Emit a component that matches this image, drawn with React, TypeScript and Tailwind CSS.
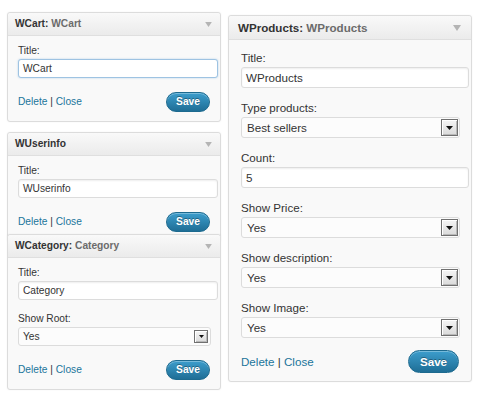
import React from "react";

type Size = "sm" | "lg";

type Field =
  | { kind: "input"; label: string; value: string; focus?: boolean }
  | { kind: "select"; label: string; value: string };

const sizes = {
  sm: {
    box: "w-[214px]",
    head: "h-[23px] pl-[7px] pr-[8px] text-[10.2px]",
    tri: "w-[7px] h-[5px]",
    body: "pt-[9px] pb-[9px] pl-[10px] pr-[10px]",
    label: "text-[10.2px] leading-[12px]",
    input: "mt-[2px] h-[19px] w-[200px] text-[10.2px] pl-[4px]",
    select: "mt-[2px] h-[19px] w-[193px] text-[10.2px] pl-[4px] pr-[2px]",
    arrow: "w-[14px] h-[13px]",
    arrowTri: "w-[5px] h-[3px]",
    group: "mb-[13px]",
    actions: "mt-[14px] text-[10.2px]",
    save: "h-[20px] w-[44px] text-[10.2px]",
  },
  lg: {
    box: "w-[244px]",
    head: "h-[24px] pl-[9px] pr-[10px] text-[11.6px]",
    tri: "w-[8px] h-[6px]",
    body: "pt-[11px] pb-[8px] pl-[12px] pr-[12px]",
    label: "text-[11.6px] leading-[14px]",
    input: "mt-[2px] h-[21px] w-[228px] text-[11.6px] pl-[4px]",
    select: "mt-[2px] h-[21px] w-[219px] text-[11.6px] pl-[5px] pr-[1px]",
    arrow: "w-[17px] h-[17px]",
    arrowTri: "w-[7px] h-[4px]",
    group: "mb-[13px]",
    actions: "mt-[12px] text-[11.6px]",
    save: "h-[23px] w-[51px] text-[11.6px]",
  },
};

function Widget({ size, name, sub, fields, className = "" }: { size: Size; name: string; sub?: string; fields: Field[]; className?: string }) {
  const s = sizes[size];
  return (
    <div className={`${s.box} ${className} border border-[#dcdcdc] rounded-[3px] bg-[#f9f9f9] shadow-[0_0_2px_rgba(0,0,0,0.06)]`}>
      {/* header */}
      <div className={`${s.head} flex items-center justify-between border-b border-[#dfdfdf] rounded-t-[3px] bg-[linear-gradient(to_bottom,#f9f9f9,#ebebeb)] font-bold`}>
        <div className="whitespace-nowrap">
          <span className="text-[#333]">{name}{sub ? ":" : ""}</span>
          {sub && <span className="text-[#6b6b6b]"> {sub}</span>}
        </div>
        <svg viewBox="0 0 8 6" className={s.tri}>
          <path d="M0 0h8L4 6z" fill="#b4b4b4" />
        </svg>
      </div>

      <div className={s.body}>
        {fields.map((f, i) => (
          <div key={f.label} className={i < fields.length - 1 ? s.group : ""}>
            <div className={`${s.label} text-[#333]`}>{f.label}</div>
            {f.kind === "input" ? (
              <div
                className={`${s.input} flex items-center rounded-[3px] bg-white text-[#333] border ${
                  f.focus
                    ? "border-[#9ec3e2] shadow-[0_0_2px_rgba(40,130,200,0.35)]"
                    : "border-[#dcdcdc] shadow-[inset_0_1px_2px_rgba(0,0,0,0.07)]"
                }`}
              >
                {f.value}
              </div>
            ) : (
              <div className={`${s.select} flex items-center justify-between rounded-[3px] border border-[#dcdcdc] bg-[#fcfcfc] text-[#333]`}>
                <span>{f.value}</span>
                <div className={`${s.arrow} flex items-center justify-center border border-[#707070] bg-[linear-gradient(to_bottom,#f5f5f5,#dadada)] shadow-[inset_1px_1px_0_#fff,inset_-1px_-1px_0_#b8b8b8]`}>
                  <svg viewBox="0 0 7 4" className={s.arrowTri}>
                    <path d="M0 0h7L3.5 4z" fill="#111" />
                  </svg>
                </div>
              </div>
            )}
          </div>
        ))}

        <div className={`${s.actions} flex items-center justify-between`}>
          <div className="text-[#333]">
            <span className="text-[#21759b]">Delete</span> | <span className="text-[#21759b]">Close</span>
          </div>
          <button
            className={`${s.save} flex items-center justify-center rounded-full border border-[#1d6a8f] bg-[linear-gradient(to_bottom,#3c9dcc,#1f6e96)] text-white font-bold shadow-[inset_0_1px_0_rgba(255,255,255,0.3)] [text-shadow:0_-1px_0_rgba(0,0,0,0.35)]`}
          >
            Save
          </button>
        </div>
      </div>
    </div>
  );
}

export default function App() {
  return (
    <div className="w-[478px] h-[400px] bg-white flex items-start font-['Liberation_Sans',Arial,sans-serif] overflow-hidden">
      {/* left column */}
      <div className="ml-[7px] mt-[12px] flex flex-col">
        <Widget size="sm" name="WCart" sub="WCart" fields={[{ kind: "input", label: "Title:", value: "WCart", focus: true }]} />
        <Widget size="sm" name="WUserinfo" className="mt-[10px]" fields={[{ kind: "input", label: "Title:", value: "WUserinfo" }]} />
        <Widget
          size="sm"
          name="WCategory"
          sub="Category"
          className="relative -mt-[8px]"
          fields={[
            { kind: "input", label: "Title:", value: "Category" },
            { kind: "select", label: "Show Root:", value: "Yes" },
          ]}
        />
      </div>

      {/* right column */}
      <div className="ml-[7px] mt-[15px]">
        <Widget
          size="lg"
          name="WProducts"
          sub="WProducts"
          fields={[
            { kind: "input", label: "Title:", value: "WProducts" },
            { kind: "select", label: "Type products:", value: "Best sellers" },
            { kind: "input", label: "Count:", value: "5" },
            { kind: "select", label: "Show Price:", value: "Yes" },
            { kind: "select", label: "Show description:", value: "Yes" },
            { kind: "select", label: "Show Image:", value: "Yes" },
          ]}
        />
      </div>
    </div>
  );
}
